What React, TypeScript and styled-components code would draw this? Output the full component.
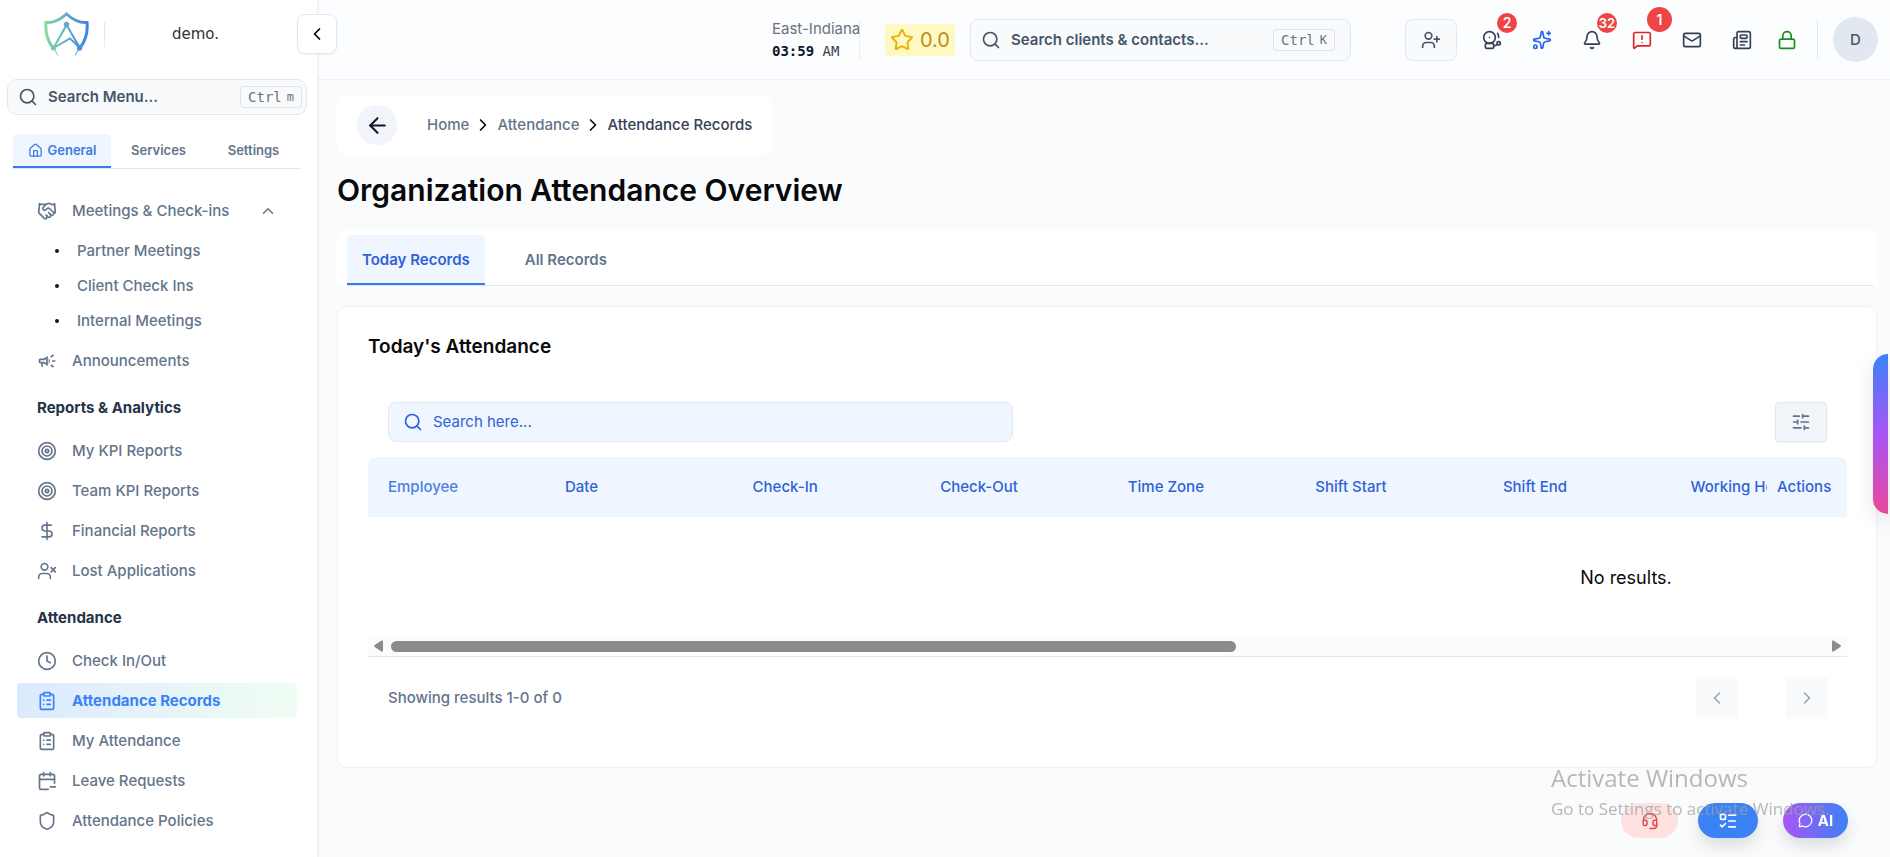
import React from "react";
import styled, { createGlobalStyle, css } from "styled-components";
import {
  ArrowLeft,
  Bell,
  BellElectric,
  CalendarMinus,
  ChevronLeft,
  ChevronRight,
  ChevronUp,
  ClipboardList,
  Clock,
  DollarSign,
  Handshake,
  Headset,
  House,
  ListTodo,
  Lock,
  Mail,
  MessageCircle,
  MessageSquareWarning,
  Newspaper,
  Search,
  Shield,
  SlidersHorizontal,
  Sparkles,
  Star,
  Target,
  UserPlus,
  UserX,
} from "lucide-react";
import { MdOutlineCampaign } from "react-icons/md";

const mono = `"DejaVu Sans Mono", "Liberation Mono", monospace`;

const GlobalStyle = createGlobalStyle`
  *, *::before, *::after { box-sizing: border-box; }
  body {
    margin: 0;
    background: #f9fbfd;
    color: #09090b;
    font-family: Inter, "Liberation Sans", sans-serif;
    font-size: 15px;
    line-height: 20px;
  }
  button, input { font: inherit; color: inherit; }
  button { cursor: pointer; padding: 0; border: 0; background: none; }
  a { color: inherit; text-decoration: none; }
  h1, h2, h3, p, ul, ol { margin: 0; padding: 0; }
  ul, ol { list-style: none; }
`;

const Shell = styled.div`
  display: flex;
  height: 100vh;
  overflow: hidden;
`;

/* Sidebar */

const Sidebar = styled.aside`
  position: relative;
  z-index: 2;
  flex: 0 0 317px;
  min-width: 0;
  background: #fff;
  box-shadow: 1px 0 4px rgba(15, 23, 42, 0.08);
`;

const Brand = styled.div`
  display: flex;
  align-items: center;
  height: 68px;
  padding: 0 44px;
`;

const BrandRule = styled.span`
  width: 1px;
  height: 25px;
  margin-left: 15px;
  background: #e2e8f0;
`;

const BrandName = styled.span`
  display: flex;
  flex: 1;
  justify-content: center;
  padding-left: 14px;
`;

const CollapseButton = styled.button`
  position: absolute;
  top: 14px;
  right: -20px;
  display: grid;
  place-items: center;
  width: 40px;
  height: 40px;
  border: 1px solid #e2e8f0;
  border-radius: 8px;
  background: #fff;
  color: #000;
  box-shadow: 0 1px 2px rgba(0, 0, 0, 0.06);
`;

const SearchField = styled.label<{ $tone: "menu" | "header" | "table" }>`
  display: flex;
  align-items: center;
  gap: 10px;
  height: 42px;
  padding: 0 15px 0 10px;
  border: 1px solid #e2e8f0;
  border-radius: 8px;
  background: #f8fafc;
  color: #475569;

  svg { flex: none; }
  input {
    flex: 1;
    width: 100%;
    min-width: 0;
    padding: 0;
    border: 0;
    outline: 0;
    background: none;
    font-weight: 600;
  }
  input::placeholder { color: inherit; opacity: 1; }

  ${(p) =>
    p.$tone === "menu" &&
    css`
      height: 36px;
      margin: 11px 10px 0 7px;
      padding: 0 4px 0 10px;
      border-radius: 10px;
    `}
  ${(p) =>
    p.$tone === "header" &&
    css`
      flex: 0 1 381px;
    `}
  ${(p) =>
    p.$tone === "table" &&
    css`
      flex: 0 1 625px;
      height: 40px;
      padding: 0 14px;
      background: #eff6ff;
      color: #2f62d9;
      input { font-weight: 400; }
    `}
`;

const Shortcut = styled.kbd`
  display: flex;
  flex: none;
  align-items: center;
  gap: 5px;
  height: 22px;
  padding: 0 7px;
  border: 1px solid #dfe3e8;
  border-radius: 4px;
  color: #6b7280;
  font: 14px/20px ${mono};

  small { font-size: 12px; }
`;

const SideTabs = styled.div`
  display: flex;
  margin: 19px 16px 0 13px;
  border-bottom: 1px solid #e2e8f0;
`;

const SideTab = styled.button<{ $active?: boolean }>`
  display: flex;
  align-items: center;
  justify-content: center;
  gap: 5px;
  flex: ${(p) => (p.$active ? "0 0 98px" : "1 1 0")};
  height: 34px;
  border-bottom: 2px solid ${(p) => (p.$active ? "#3b7be3" : "transparent")};
  border-radius: 4px 4px 0 0;
  background: ${(p) => (p.$active ? "#eff6ff" : "transparent")};
  color: ${(p) => (p.$active ? "#3b7be3" : "#64748b")};
  font-size: 13px;
  font-weight: 600;
`;

const SideNav = styled.nav`
  padding: 24px 20px 0 17px;
`;

const NavItem = styled.a<{ $active?: boolean }>`
  display: flex;
  align-items: center;
  gap: 15px;
  height: 35px;
  margin-bottom: 5px;
  padding: 0 20px;
  border-radius: 4px;
  color: ${(p) => (p.$active ? "#3b82f6" : "#64748b")};
  background: ${(p) => (p.$active ? "linear-gradient(90deg, #dbeafe, #f0fdf4)" : "none")};
  font-weight: ${(p) => (p.$active ? 700 : 500)};

  svg { flex: none; }
  svg:nth-of-type(2) { margin-left: auto; }
`;

const SubNav = styled.ul`
  margin-bottom: 5px;
`;

const SubItem = styled.li`
  display: flex;
  align-items: center;
  gap: 18px;
  height: 35px;
  padding-left: 38px;
  color: #64748b;
  font-weight: 500;

  &::before {
    content: "";
    width: 4px;
    height: 4px;
    border-radius: 2px;
    background: #0f172a;
  }
`;

const NavHeading = styled.h3`
  height: 50px;
  padding: 0 20px;
  color: #253347;
  font-size: 15px;
  font-weight: 700;
  line-height: 50px;
`;

/* Header */

const Body = styled.div`
  display: flex;
  flex: 1;
  flex-direction: column;
  min-width: 0;
`;

const TopBar = styled.header`
  display: flex;
  align-items: center;
  justify-content: flex-end;
  height: 80px;
  flex: none;
  padding-right: 12px;
  border-bottom: 1px solid #eef2f6;
  background: #fcfdfe;
`;

const ClockBox = styled.div`
  display: flex;
  flex-direction: column;
  justify-content: center;
  width: 88px;
  height: 39px;
  margin-right: 25px;
  border-right: 1px solid #e8ecf1;
  color: #6b7280;
  line-height: 22px;
  white-space: nowrap;
`;

const Time = styled.p`
  color: #374151;
  font: 14px/22px ${mono};

  strong { color: #0f172a; }
`;

const Rating = styled.div`
  display: flex;
  align-items: center;
  justify-content: center;
  gap: 6px;
  width: 70px;
  height: 32px;
  margin-right: 15px;
  border-radius: 4px;
  background: #fef9c3;
  color: #c08a1c;
  font-size: 20px;
`;

const InviteButton = styled.button`
  display: grid;
  place-items: center;
  width: 52px;
  height: 42px;
  margin: 0 10px 0 54px;
  border: 1px solid #e2e8f0;
  border-radius: 8px;
  background: #f8fafc;
  color: #475569;
`;

const IconButton = styled.button<{ $color?: string }>`
  position: relative;
  display: grid;
  place-items: center;
  width: 50px;
  height: 40px;
  color: ${(p) => p.$color ?? "#334155"};

  &:last-of-type { width: 40px; }
`;

const Badge = styled.span<{ $large?: boolean; $dense?: boolean }>`
  position: absolute;
  top: ${(p) => (p.$large ? -13 : -7)}px;
  left: 30px;
  width: ${(p) => (p.$large ? 25 : 20)}px;
  height: ${(p) => (p.$large ? 25 : 20)}px;
  border-radius: 50%;
  background: #ef4444;
  color: #fff;
  font-size: ${(p) => (p.$dense ? 13 : 14)}px;
  font-weight: 600;
  line-height: ${(p) => (p.$large ? 25 : 20)}px;
  text-align: center;
`;

const Avatar = styled.span`
  display: grid;
  place-items: center;
  width: 45px;
  height: 45px;
  border-radius: 50%;
  background: #e2e8f0;
  color: #475569;
  font-weight: 500;
`;

const AvatarRule = styled.span`
  width: 1px;
  height: 39px;
  margin: 0 15px 0 10px;
  background: #e2e8f0;
`;

/* Page */

const Page = styled.main`
  flex: 1;
  padding: 15px 13px 0 20px;
`;

const CrumbCard = styled.nav`
  display: flex;
  align-items: center;
  gap: 30px;
  width: fit-content;
  height: 60px;
  padding: 0 20px;
  border-radius: 10px;
  background: #fff;
`;

const BackButton = styled.button`
  display: grid;
  place-items: center;
  width: 40px;
  height: 40px;
  border-radius: 50%;
  background: #f1f5f9;
  color: #0f172a;
`;

const Crumbs = styled.ol`
  display: flex;
  align-items: center;
  gap: 4px;
  color: #64748b;
  font-weight: 500;

  li { display: flex; align-items: center; gap: 4px; }
  li:last-child { color: #334155; }
  svg { color: #09090b; }
`;

const Title = styled.h1`
  margin: 16px 0 21px;
  font-size: 30px;
  font-weight: 600;
  line-height: 38px;
`;

const TabPanel = styled.div`
  padding: 5px 4px 0 10px;
  border-radius: 10px 10px 0 0;
  background: #fff;
`;

const TabList = styled.div`
  display: flex;
  gap: 25px;
  border-bottom: 1px solid #dfe4ea;
`;

const Tab = styled.button<{ $active?: boolean }>`
  height: 50px;
  padding: 2px 15px 0;
  border-bottom: 2px solid ${(p) => (p.$active ? "#3b7be3" : "transparent")};
  border-radius: 4px 4px 0 0;
  background: ${(p) => (p.$active ? "#eff6ff" : "transparent")};
  color: ${(p) => (p.$active ? "#2f62d9" : "#64748b")};
  font-weight: 600;
`;

const Card = styled.section`
  margin-top: 20px;
  padding: 25px 29px 48px 30px;
  border: 1px solid #edf1f6;
  border-radius: 10px;
  background: #fff;
`;

const CardTitle = styled.h2`
  font-size: 19px;
  font-weight: 600;
  line-height: 30px;
`;

const TableTools = styled.div`
  display: flex;
  align-items: center;
  justify-content: space-between;
  margin: 40px 20px 15px;
`;

const FilterButton = styled.button`
  display: grid;
  place-items: center;
  width: 52px;
  height: 40px;
  border: 1px solid #e2e8f0;
  border-radius: 4px;
  background: #f1f5f9;
  color: #64748b;
  box-shadow: 0 1px 2px rgba(0, 0, 0, 0.05);
`;

const TableScroller = styled.div`
  overflow-x: auto;
  scrollbar-width: none;
  border-radius: 8px 8px 0 0;
`;

const Table = styled.table`
  width: 2508px;
  table-layout: fixed;
  border-collapse: separate;
  border-spacing: 0;

  th {
    height: 60px;
    padding: 0 20px;
    background: #eff6ff;
    color: #2f62d9;
    font-weight: 500;
    text-align: left;
  }
  th:first-child { width: 177px; color: #4a80e8; }
  th:last-child {
    position: sticky;
    right: 0;
    width: 80px;
    padding: 0 10px;
  }
  td {
    height: 119px;
    padding: 2px 12px 0 20px;
    font-size: 18px;
    text-align: center;
  }
`;

const ScrollTrack = styled.div`
  display: flex;
  align-items: center;
  gap: 8px;
  height: 21px;
  padding: 0 6px;
  border-bottom: 1px solid #e2e8f0;
  background: #fcfcfc;
`;

const ScrollLane = styled.div`
  flex: 1;
`;

const ScrollThumb = styled.div`
  width: 59%;
  height: 11px;
  border-radius: 6px;
  background: #8b8b8b;
`;

const TableFooter = styled.footer`
  display: flex;
  align-items: center;
  justify-content: space-between;
  padding: 20px 19px 0 20px;
  color: #64748b;
  font-weight: 500;
`;

const Pager = styled.div`
  display: flex;
  gap: 48px;
`;

const PageButton = styled.button`
  display: grid;
  place-items: center;
  width: 42px;
  height: 42px;
  border-radius: 4px;
  background: #f8fafc;
  color: #9aa5b5;
`;

/* Floating pieces */

const EdgeHandle = styled.button`
  position: fixed;
  z-index: 3;
  top: 354px;
  right: 2px;
  width: 15px;
  height: 160px;
  border-radius: 15px 0 0 15px;
  background: linear-gradient(#3b82f6, #a855f7 50%, #ec4899);
  box-shadow: 0 8px 20px rgba(0, 0, 0, 0.12);
`;

const QuickActions = styled.div`
  position: fixed;
  z-index: 3;
  right: 42px;
  bottom: 19px;
  display: flex;
`;

const Pill = styled.button<{ $kind: "support" | "tasks" | "ai" }>`
  display: flex;
  align-items: center;
  justify-content: center;
  gap: 5px;
  height: 35px;
  border-radius: 18px;
  color: #fff;
  font-weight: 700;
  ${(p) => p.$kind === "support" && css`width: 57px; background: #fee2e2; color: #e5484d;`}
  ${(p) =>
    p.$kind === "tasks" &&
    css`
      width: 60px;
      margin: 0 25px 0 20px;
      background: #3b82f6;
      box-shadow: 0 8px 16px rgba(0, 0, 0, 0.12);
    `}
  ${(p) =>
    p.$kind === "ai" &&
    css`
      width: 65px;
      background: linear-gradient(90deg, #a855f7, #3b82f6);
      box-shadow: 0 8px 16px rgba(0, 0, 0, 0.12);
    `}
`;

const Activation = styled.div`
  position: fixed;
  z-index: 4;
  right: 56px;
  bottom: 34px;
  width: 283px;
  color: rgba(160, 160, 160, 0.75);
  font-family: "Open Sans", "Noto Sans", sans-serif;
  font-size: 17px;
  line-height: 28px;
  white-space: nowrap;
  pointer-events: none;

  strong { display: block; font-size: 24px; font-weight: 400; line-height: 34px; }
`;

function Logo() {
  return (
    <svg width="45" height="44" viewBox="0 0 45 44" fill="none" aria-label="Home">
      <defs>
        <linearGradient id="brand" x1="0" y1="0" x2="45" y2="0" gradientUnits="userSpaceOnUse">
          <stop offset="0" stopColor="#86e09a" />
          <stop offset="0.5" stopColor="#62a9c4" />
          <stop offset="1" stopColor="#3f7fe6" />
        </linearGradient>
      </defs>
      <g stroke="url(#brand)">
        <path d="M9 36C3 28 1 20 2 10.500C10 11 17 7 22.500 2C28 7 35 11 43 10.500C44 20 42 28 36 36" strokeWidth="3" />
        <path d="M22.500 13L9.500 36L26 26.500L36 36L22.500 13" strokeWidth="2" />
        <path d="M9.500 36L14 43.500M35.500 36L31 43.500" strokeWidth="1" />
      </g>
      <g fill="url(#brand)">
        <circle cx="22.500" cy="12.500" r="2.700" />
        <circle cx="9.500" cy="36" r="2.500" />
        <circle cx="35.500" cy="36" r="2.700" />
      </g>
    </svg>
  );
}

function Wordmark() {
  return (
    <svg width="48" height="16" viewBox="0 0 48 16" role="img" aria-label="demo">
      <text x="0" y="13" fontFamily="DejaVu Sans" fontSize="15" fill="#333">demo.</text>
    </svg>
  );
}

const columns = ["Date", "Check-In", "Check-Out", "Time Zone", "Shift Start", "Shift End", "Working Hours"];

const reports = [
  { icon: Target, label: "My KPI Reports" },
  { icon: Target, label: "Team KPI Reports" },
  { icon: DollarSign, label: "Financial Reports" },
  { icon: UserX, label: "Lost Applications" },
];

const attendance = [
  { icon: Clock, label: "Check In/Out" },
  { icon: ClipboardList, label: "Attendance Records", active: true },
  { icon: ClipboardList, label: "My Attendance" },
  { icon: CalendarMinus, label: "Leave Requests" },
  { icon: Shield, label: "Attendance Policies" },
];

export default function App() {
  return (
    <>
      <GlobalStyle />
      <Shell>
        <Sidebar>
          <Brand>
            <Logo />
            <BrandRule />
            <BrandName><Wordmark /></BrandName>
          </Brand>
          <CollapseButton aria-label="Collapse menu"><ChevronLeft size={20} /></CollapseButton>
          <SearchField $tone="menu">
            <Search size={20} />
            <input placeholder="Search Menu..." aria-label="Search menu" />
            <Shortcut>Ctrl <small>m</small></Shortcut>
          </SearchField>
          <SideTabs role="tablist">
            <SideTab role="tab" $active><House size={15} />General</SideTab>
            <SideTab role="tab">Services</SideTab>
            <SideTab role="tab">Settings</SideTab>
          </SideTabs>
          <SideNav>
            <NavItem href="#meetings"><Handshake size={20} />Meetings &amp; Check-ins<ChevronUp size={18} /></NavItem>
            <SubNav>
              <SubItem><a href="#partner">Partner Meetings</a></SubItem>
              <SubItem><a href="#client">Client Check Ins</a></SubItem>
              <SubItem><a href="#internal">Internal Meetings</a></SubItem>
            </SubNav>
            <NavItem href="#announcements"><MdOutlineCampaign size={20} />Announcements</NavItem>
            <NavHeading>Reports &amp; Analytics</NavHeading>
            {reports.map(({ icon: Icon, label }) => (
              <NavItem key={label} href="#reports"><Icon size={20} />{label}</NavItem>
            ))}
            <NavHeading>Attendance</NavHeading>
            {attendance.map(({ icon: Icon, label, active }) => (
              <NavItem key={label} href="#attendance" $active={active}><Icon size={20} />{label}</NavItem>
            ))}
          </SideNav>
        </Sidebar>

        <Body>
          <TopBar>
            <ClockBox>
              <span>East-Indiana</span>
              <Time><strong>03:59</strong> AM</Time>
            </ClockBox>
            <Rating><Star size={24} color="#eab308" />0.0</Rating>
            <SearchField $tone="header">
              <Search size={20} />
              <input placeholder="Search clients &amp; contacts..." aria-label="Search clients and contacts" />
              <Shortcut>Ctrl <small>K</small></Shortcut>
            </SearchField>
            <InviteButton aria-label="Add contact"><UserPlus size={20} /></InviteButton>
            <IconButton aria-label="Alerts"><BellElectric size={20} /><Badge>2</Badge></IconButton>
            <IconButton aria-label="Assistant" $color="#2563eb"><Sparkles size={20} /></IconButton>
            <IconButton aria-label="Notifications"><Bell size={20} /><Badge $dense>32</Badge></IconButton>
            <IconButton aria-label="Warnings" $color="#dc2626"><MessageSquareWarning size={20} /><Badge $large>1</Badge></IconButton>
            <IconButton aria-label="Mail"><Mail size={20} /></IconButton>
            <IconButton aria-label="News"><Newspaper size={20} /></IconButton>
            <IconButton aria-label="Lock" $color="#15901a"><Lock size={20} /></IconButton>
            <AvatarRule />
            <Avatar>D</Avatar>
          </TopBar>

          <Page>
            <CrumbCard aria-label="Breadcrumb">
              <BackButton aria-label="Back"><ArrowLeft size={25} /></BackButton>
              <Crumbs>
                <li><a href="#home">Home</a><ChevronRight size={20} /></li>
                <li><a href="#attendance">Attendance</a><ChevronRight size={20} /></li>
                <li>Attendance Records</li>
              </Crumbs>
            </CrumbCard>
            <Title>Organization Attendance Overview</Title>
            <TabPanel>
              <TabList role="tablist">
                <Tab role="tab" $active>Today Records</Tab>
                <Tab role="tab">All Records</Tab>
              </TabList>
            </TabPanel>
            <Card>
              <CardTitle>Today's Attendance</CardTitle>
              <TableTools>
                <SearchField $tone="table">
                  <Search size={20} />
                  <input placeholder="Search here..." aria-label="Search attendance" />
                </SearchField>
                <FilterButton aria-label="Filters"><SlidersHorizontal size={20} /></FilterButton>
              </TableTools>
              <TableScroller>
                <Table>
                  <thead>
                    <tr>
                      <th>Employee</th>
                      {columns.map((name) => <th key={name}>{name}</th>)}
                      <th colSpan={5} />
                      <th>Actions</th>
                    </tr>
                  </thead>
                  <tbody>
                    <tr><td colSpan={14}>No results.</td></tr>
                  </tbody>
                </Table>
              </TableScroller>
              <ScrollTrack aria-hidden>
                <svg width="9" height="12" fill="#8b8b8b"><path d="M9 1.500v9q0 1.500-1.500 1L.7 7Q-.4 6 .7 5L7.500.500Q9 0 9 1.500z" /></svg>
                <ScrollLane><ScrollThumb /></ScrollLane>
                <svg width="9" height="12" fill="#8b8b8b"><path d="M0 1.500v9q0 1.500 1.500 1L8.300 7Q9.400 6 8.300 5L1.500.500Q0 0 0 1.500z" /></svg>
              </ScrollTrack>
              <TableFooter>
                <span>Showing results 1-0 of 0</span>
                <Pager>
                  <PageButton aria-label="Previous page"><ChevronLeft size={20} /></PageButton>
                  <PageButton aria-label="Next page"><ChevronRight size={20} /></PageButton>
                </Pager>
              </TableFooter>
            </Card>
          </Page>
        </Body>
      </Shell>

      <EdgeHandle aria-label="Open side panel" />
      <QuickActions>
        <Pill $kind="support" aria-label="Support"><Headset size={18} /></Pill>
        <Pill $kind="tasks" aria-label="Tasks"><ListTodo size={20} /></Pill>
        <Pill $kind="ai"><MessageCircle size={15} />AI</Pill>
      </QuickActions>
      <Activation>
        <strong>Activate Windows</strong>
        Go to Settings to activate Windows.
      </Activation>
    </>
  );
}
